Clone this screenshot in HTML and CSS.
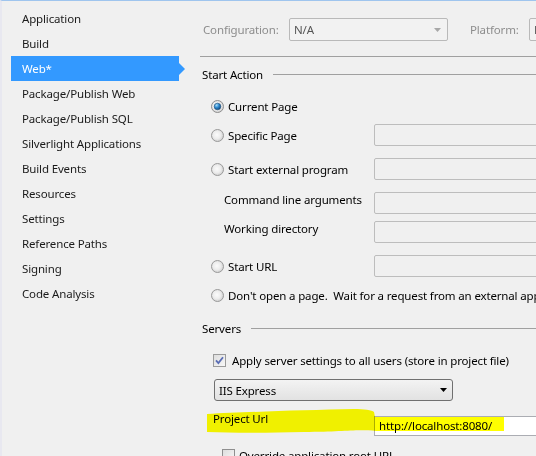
FILE: index.html
```html
<!DOCTYPE html>
<html>
<head>
<meta charset="utf-8">
<link rel="stylesheet" href="styles.css">
</head>
<body>
<svg class="defs" width="0" height="0" aria-hidden="true">
  <defs>
    <radialGradient id="rg" cx="0.45" cy="0.45" r="0.6">
      <stop offset="0" stop-color="#fbfbfb"/>
      <stop offset="0.55" stop-color="#ececec"/>
      <stop offset="1" stop-color="#c9c9c9"/>
    </radialGradient>
    <radialGradient id="rdot" cx="0.35" cy="0.3" r="0.8">
      <stop offset="0" stop-color="#a9e0fb"/>
      <stop offset="0.45" stop-color="#2f8ad0"/>
      <stop offset="1" stop-color="#0d3c6a"/>
    </radialGradient>
    <linearGradient id="cbg" x1="0" y1="0" x2="1" y2="1">
      <stop offset="0" stop-color="#dcdcdc"/>
      <stop offset="1" stop-color="#f9f9f9"/>
    </linearGradient>
  </defs>
</svg>
<div class="window">
  <nav class="nav">
    <div class="nav-item">Application</div>
    <div class="nav-item">Build</div>
    <div class="nav-item selected">Web*</div>
    <div class="nav-item">Package/Publish Web</div>
    <div class="nav-item">Package/Publish SQL</div>
    <div class="nav-item">Silverlight Applications</div>
    <div class="nav-item">Build Events</div>
    <div class="nav-item">Resources</div>
    <div class="nav-item">Settings</div>
    <div class="nav-item">Reference Paths</div>
    <div class="nav-item">Signing</div>
    <div class="nav-item">Code Analysis</div>
  </nav>
  <main class="panel">
    <div class="topbar">
      <span class="dim cfg-label">Configuration:</span>
      <div class="combo combo-disabled cfg-combo">
        <span class="combo-text">N/A</span>
        <svg class="arrow" width="7" height="4" viewBox="0 0 7 4"><path d="M0 0H7L3.5 4Z" fill="#a8a8a8"/></svg>
      </div>
      <span class="dim plat-label">Platform:</span>
      <div class="combo combo-disabled plat-combo"><span class="combo-text">N/A</span></div>
    </div>

    <section class="group">
      <div class="group-head"><span>Start Action</span><div class="rule"></div></div>

      <div class="row r1">
        <div class="opt">
          <svg class="radio" width="13" height="13" viewBox="0 0 13 13"><circle cx="6.5" cy="6.5" r="6" fill="url(#rg)" stroke="#8f8f8f"/><circle cx="6.5" cy="6.5" r="3.3" fill="url(#rdot)" stroke="#1d4f7c" stroke-width="0.6"/></svg>
          <span>Current Page</span>
        </div>
      </div>
      <div class="row r2">
        <div class="opt">
          <svg class="radio" width="13" height="13" viewBox="0 0 13 13"><circle cx="6.5" cy="6.5" r="6" fill="url(#rg)" stroke="#9a9a9a"/></svg>
          <span>Specific Page</span>
        </div>
        <div class="textbox"></div>
      </div>
      <div class="row r3">
        <div class="opt">
          <svg class="radio" width="13" height="13" viewBox="0 0 13 13"><circle cx="6.5" cy="6.5" r="6" fill="url(#rg)" stroke="#9a9a9a"/></svg>
          <span>Start external program</span>
        </div>
        <div class="textbox"></div>
      </div>
      <div class="row r4">
        <div class="sub">Command line arguments</div>
        <div class="textbox"></div>
      </div>
      <div class="row r5">
        <div class="sub">Working directory</div>
        <div class="textbox"></div>
      </div>
      <div class="row r6">
        <div class="opt">
          <svg class="radio" width="13" height="13" viewBox="0 0 13 13"><circle cx="6.5" cy="6.5" r="6" fill="url(#rg)" stroke="#9a9a9a"/></svg>
          <span>Start URL</span>
        </div>
        <div class="textbox"></div>
      </div>
      <div class="row r7">
        <div class="opt wide">
          <svg class="radio" width="13" height="13" viewBox="0 0 13 13"><circle cx="6.5" cy="6.5" r="6" fill="url(#rg)" stroke="#9a9a9a"/></svg>
          <span>Don't open a page.&nbsp; Wait for a request from an external application.</span>
        </div>
      </div>
    </section>

    <section class="group">
      <div class="group-head servers-head"><span>Servers</span><div class="rule"></div></div>

      <div class="row s1">
        <svg class="check" width="13" height="13" viewBox="0 0 13 13"><rect x="0.5" y="0.5" width="12" height="12" fill="url(#cbg)" stroke="#9b9b9b"/><path d="M3 6.3L5.4 9L10 3.2" fill="none" stroke="#5a6db4" stroke-width="1.8"/></svg>
        <span>Apply server settings to all users (store in project file)</span>
      </div>
      <div class="combo server-combo">
        <span class="combo-text">IIS Express</span>
        <svg class="arrow" width="7" height="4" viewBox="0 0 7 4"><path d="M0 0H7L3.5 4Z" fill="#000"/></svg>
      </div>
      <div class="row url-row">
        <div class="url-label">Project Url</div>
        <div class="textbox url-box">http://localhost:8080/</div>
      </div>
      <div class="row s4">
        <svg class="check" width="13" height="13" viewBox="0 0 13 13"><rect x="0.5" y="0.5" width="12" height="12" fill="url(#cbg)" stroke="#8f8f8f"/></svg>
        <span>Override application root URL</span>
      </div>
    </section>
  </main>

  <svg class="highlight" width="304" height="30" viewBox="0 0 304 30">
    <path d="M3 8 C40 6 100 4 150 3 C160 3 168 4 170 6 L171 11 L300 11 L300 25 L172 25 C150 23 140 26 100 26 C60 27 30 27 3 26 Z" fill="#ffff00"/>
  </svg>
</div>
</body>
</html>
```

FILE: styles.css
```css
* { box-sizing: border-box; }

html, body {
  margin: 0;
  padding: 0;
  background: #f0f0f0;
}

body {
  width: 536px;
  height: 456px;
  overflow: hidden;
  font-family: "Noto Sans", "Open Sans", sans-serif;
  font-size: 11.5px;
  letter-spacing: -0.15px;
  color: #000;
}

.defs { position: absolute; }

.window {
  position: relative;
  display: flex;
  width: 536px;
  height: 456px;
  overflow: hidden;
  border-top: 1px solid #9fc5ee;
  border-left: 2px solid #e8e8f0;
}

/* ---------- left navigation ---------- */
.nav {
  flex: 0 0 188px;
  padding-top: 5px;
}

.nav-item {
  position: relative;
  margin-left: 9px;
  width: 168px;
  height: 25px;
  line-height: 25px;
  padding-left: 11px;
  color: #1b1b1b;
  white-space: nowrap;
}

.nav-item.selected {
  background: #3399ff;
  color: #fff;
}

.nav-item.selected::after {
  content: "";
  position: absolute;
  right: -6px;
  top: 7px;
  border-left: 6px solid #3399ff;
  border-top: 6px solid transparent;
  border-bottom: 6px solid transparent;
}

/* ---------- right panel ---------- */
.panel {
  flex: 1 1 auto;
  min-width: 0;
  padding-left: 10px;
}

.topbar {
  display: flex;
  align-items: center;
  padding: 17px 0 15px 3px;
  border-bottom: 1px solid #a0a0a0;
  white-space: nowrap;
}

.dim { color: #8d8d8d; }

.cfg-label { width: 86px; flex: none; }
.plat-label { width: 59px; flex: none; margin-left: 22px; }

.combo {
  flex: none;
  display: flex;
  align-items: center;
  justify-content: space-between;
  height: 23px;
  padding: 0 4px 0 4px;
  border-radius: 2px;
}

.combo-disabled {
  border: 1px solid #b9b9b9;
  background: #f2f2f2;
  color: #555;
}

.cfg-combo { width: 159px; }
.plat-combo { width: 60px; }

.combo .arrow { margin-right: 2px; }

/* group sections */
.group-head {
  display: flex;
  align-items: center;
  height: 16px;
  margin-top: 9px;
  padding-left: 2px;
  white-space: nowrap;
}

.group-head .rule {
  flex: 1 1 auto;
  border-top: 1px solid #a0a0a0;
  margin-left: 10px;
}

.servers-head { margin-top: 14px; }
.servers-head .rule { margin-left: 10px; }

.row {
  display: flex;
  align-items: center;
  height: 22px;
  white-space: nowrap;
}

.opt {
  flex: none;
  display: flex;
  align-items: center;
  gap: 4px;
  width: 174px;
  padding-left: 11px;
}

.opt.wide { width: auto; }

.radio { flex: none; }

.sub {
  flex: none;
  width: 174px;
  padding-left: 24px;
  align-self: flex-start;
  line-height: 16px;
  padding-top: 0;
}

.textbox {
  flex: none;
  width: 220px;
  height: 22px;
  border: 1px solid #bdbdbd;
  border-radius: 2px;
  background: #f0f0f0;
}

.r1 { margin-top: 13px; }
.r2 { margin-top: 7px; }
.r3 { margin-top: 12px; }
.r4 { margin-top: 12px; }
.r5 { margin-top: 7px; }
.r6 { margin-top: 12px; }
.r7 { margin-top: 7px; }

.s1 {
  margin-top: 13px;
  padding-left: 13px;
  gap: 6px;
}

.server-combo {
  margin-top: 8px;
  margin-left: 14px;
  width: 239px;
  height: 22px;
  padding-left: 4px;
  padding-right: 3px;
  border: 1px solid #707070;
  border-radius: 3px;
  background: linear-gradient(#f3f3f3, #e2e2e2);
  color: #000;
}

.url-row {
  margin-top: 15px;
  height: 20px;
}

.url-label {
  flex: none;
  width: 161px;
  margin-left: 13px;
  align-self: flex-start;
  line-height: 16px;
  margin-top: -5px;
}

.url-box {
  height: 20px;
  background: #fff;
  border-color: #abadb3;
  border-radius: 0;
  padding-left: 4px;
  line-height: 18px;
}

.s4 {
  margin-top: 8px;
  padding-left: 22px;
  gap: 4px;
}

.check { flex: none; }

/* annotation highlighter stroke */
.highlight {
  position: absolute;
  left: 202px;
  top: 405px;
  mix-blend-mode: multiply;
  pointer-events: none;
}
```
